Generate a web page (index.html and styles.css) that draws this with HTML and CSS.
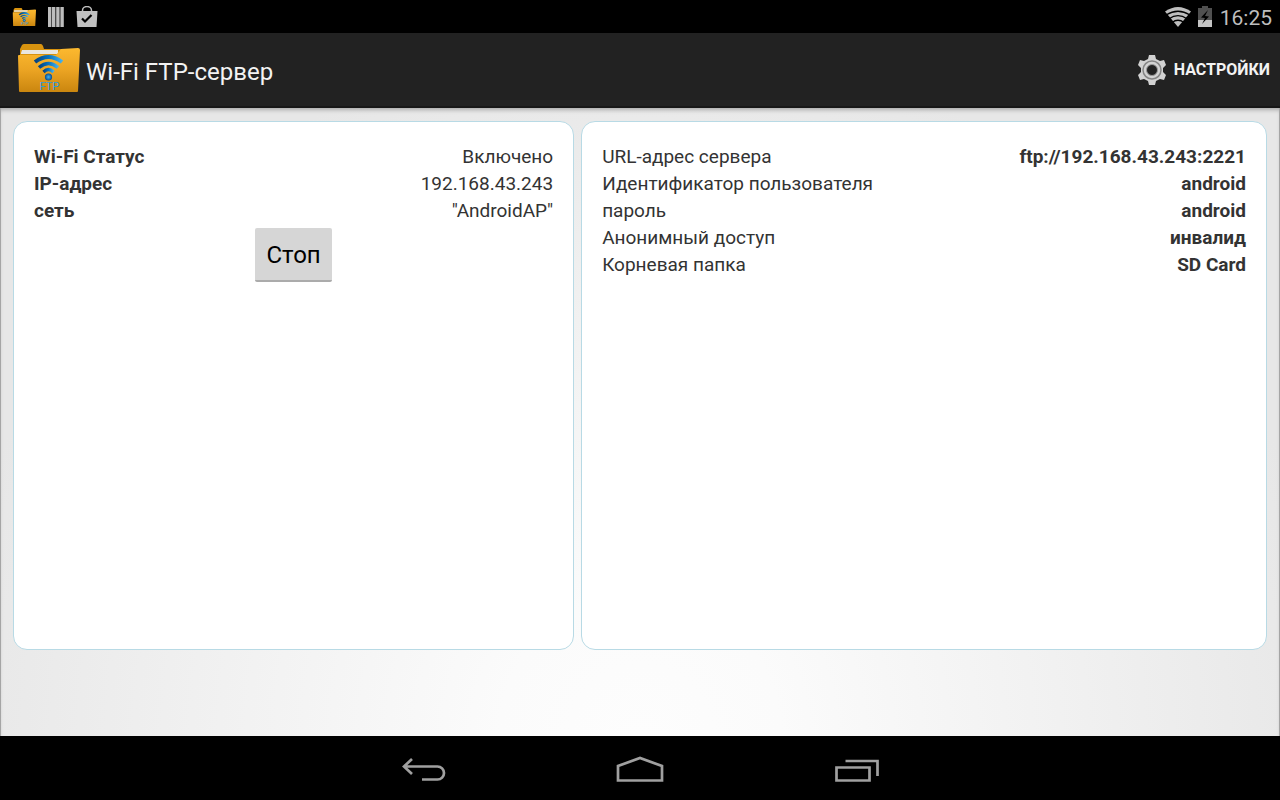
FILE: index.html
```html
<!DOCTYPE html>
<html lang="ru">
<head>
<meta charset="utf-8">
<meta name="viewport" content="width=device-width, initial-scale=1">
<title>Wi-Fi FTP-сервер</title>
<link rel="stylesheet" href="styles.css">
</head>
<body>
<svg class="defs" aria-hidden="true">
  <defs>
    <linearGradient id="folder" x1="0" y1="0" x2="0" y2="1"><stop offset="0" stop-color="#fcb92f"/><stop offset=".5" stop-color="#eba423"/><stop offset="1" stop-color="#ca860f"/></linearGradient>
    <linearGradient id="wave" x1="0" y1="0" x2="1" y2="0"><stop offset="0" stop-color="#05427f"/><stop offset=".5" stop-color="#0872be"/><stop offset="1" stop-color="#43b0ee"/></linearGradient>
    <radialGradient id="ball"><stop offset="0" stop-color="#40b5f4"/><stop offset="1" stop-color="#064a8e"/></radialGradient>
    <symbol id="app" viewBox="0 0 64 50">
      <path d="M4 12V6l2-4q1-1 2-1h17q1 0 2 2l1 3h32v7H4z" fill="#d8930f"/>
      <path d="M5 10l1-3h36v4H5z" fill="#e9e6df"/>
      <path d="M2 13q0-1 1-1h37l5-6 17-1q2 0 2 2l-2 41q0 1-1 1H4q-1 0-1-1z" fill="url(#folder)"/>
      <g fill="none" stroke="url(#wave)">
        <path d="M19 19q13.500-10 27 0" stroke-width="4"/><path d="M23 24.500q9.500-8 19 0" stroke-width="3.500"/><path d="M27.500 29q5-5 10 0" stroke-width="3.200"/>
      </g>
      <circle cx="32.500" cy="34" r="3.600" fill="url(#ball)"/>
      <text x="33.500" y="46.500" text-anchor="middle" class="app-label">FTP</text>
    </symbol>
  </defs>
</svg>
<div class="screen">
  <div class="status">
    <div class="status-group">
      <svg class="mini-app" viewBox="0 0 64 50"><use href="#app"/></svg>
      <svg class="mini-bars" viewBox="0 0 16 20" fill="#bdbdbd"><path d="M0 0h3.400v20H0zM4 0h3.400v20H4zM8.200 0h3.400v20H8.200zM12.400 0h3.400v20h-3.400z"/></svg>
      <svg class="mini-bag" viewBox="0 0 21 21"><path d="M6 6V4.500a4.500 4 0 0 1 9 0V6" fill="none" stroke="#bdbdbd" stroke-width="1.500"/><path d="M0 5h21l-1 16H1z" fill="#c0c0c0"/><path d="M5.500 12.500l3 3 6.500-6.500" fill="none" stroke="#000" stroke-width="2.200"/></svg>
    </div>
    <div class="status-group status-right">
      <svg class="wifi" viewBox="0 0 26 20"><path d="M13 20L0 4.500Q13-4.500 26 4.500z" fill="#bebebe"/><g fill="none" stroke="#000" stroke-width="1.300"><path d="M1 8q12-7.500 24 0"/><path d="M4 11.700q9-6 18 0"/><path d="M7 15.500q6-4.500 12 0"/></g></svg>
      <svg class="battery" viewBox="0 0 14 21"><path d="M4 0h6v2h4v19H0V2h4z" fill="#505050"/><path d="M0 14h14v7H0z" fill="#c4c4c4"/><path d="M10 4L3 11.500l4 .5-3 6 7-7.500-4-.5z" fill="#000"/></svg>
      <time class="clock">16:25</time>
    </div>
  </div>
  <header class="bar">
    <svg class="logo" viewBox="0 0 64 50"><use href="#app"/></svg>
    <h1 class="title">Wi-Fi FTP-сервер</h1>
    <button class="settings" type="button">
      <svg class="gear" viewBox="0 0 28 30"><path d="M11 0h6l1 4 4 2 4-1 2 5-3 3v4l3 3-2 5-4-1-4 2-1 4h-6l-1-4-4-2-4 1-2-5 3-3v-4l-3-3 2-5 4 1 4-2z" fill="#d2d2d2"/><circle cx="14" cy="15" r="9" fill="none" stroke="#858585" stroke-width="1.500"/><circle cx="14" cy="15" r="5.500" fill="#222" stroke="#999" stroke-width="1"/></svg>
      НАСТРОЙКИ
    </button>
  </header>
  <main class="content">
    <section class="card">
      <dl class="rows labels-bold">
        <div class="row"><dt>Wi-Fi Статус</dt><dd>Включено</dd></div>
        <div class="row"><dt>IP-адрес</dt><dd>192.168.43.243</dd></div>
        <div class="row"><dt>сеть</dt><dd>"AndroidAP"</dd></div>
      </dl>
      <button class="stop" type="button">Стоп</button>
    </section>
    <section class="card">
      <dl class="rows values-bold">
        <div class="row"><dt>URL-адрес сервера</dt><dd>ftp://192.168.43.243:2221</dd></div>
        <div class="row"><dt>Идентификатор пользователя</dt><dd>android</dd></div>
        <div class="row"><dt>пароль</dt><dd>android</dd></div>
        <div class="row"><dt>Анонимный доступ</dt><dd>инвалид</dd></div>
        <div class="row"><dt>Корневая папка</dt><dd>SD Card</dd></div>
      </dl>
    </section>
  </main>
  <nav class="nav">
    <button class="nav-button" type="button" aria-label="Назад"><svg class="nav-icon" viewBox="0 0 48 28"><path d="M12 4L4 11.500l8 7.500M4 11.500h33.500a6.500 6.500 0 0 1 0 13H22" fill="none" stroke="#a0a0a0" stroke-width="2.700"/></svg></button>
    <button class="nav-button" type="button" aria-label="Домой"><svg class="nav-icon" viewBox="0 0 48 28"><path d="M2 25.500V11l22-8 22 8v14.500z" fill="none" stroke="#a0a0a0" stroke-width="2.700"/></svg></button>
    <button class="nav-button" type="button" aria-label="Недавние"><svg class="nav-icon" viewBox="0 0 48 28"><path d="M4.500 12.500h33v13h-33zM13.500 6h32v15" fill="none" stroke="#a0a0a0" stroke-width="2.700"/></svg></button>
  </nav>
</div>
</body>
</html>
```
FILE: styles.css
```css
* {
  box-sizing: border-box;
}

body {
  margin: 0;
  font-family: Roboto, "Noto Sans", sans-serif;
  color: #333;
  background: #000;
}

button {
  font-family: inherit;
  border: 0;
  cursor: pointer;
}

.defs {
  position: absolute;
  width: 0;
  height: 0;
}

.app-label {
  font: 11px Roboto, sans-serif;
  fill: #2b9be0;
}

.screen {
  display: flex;
  flex-direction: column;
  min-height: 100vh;
}

.status {
  display: flex;
  justify-content: space-between;
  height: 33px;
  padding: 0 8px 0 12px;
}

.status-group {
  display: flex;
  align-items: center;
  gap: 12px;
}

.status-right {
  gap: 7px;
}

.mini-app {
  width: 24px;
  height: 20px;
}

.mini-bars {
  width: 16px;
  height: 20px;
}

.mini-bag {
  width: 22px;
  height: 21px;
}

.wifi {
  width: 26px;
  height: 20px;
}

.battery {
  width: 14px;
  height: 21px;
}

.clock {
  padding: 2px 0 0 1px;
  font-size: 21px;
  line-height: 30px;
  color: #bebebe;
}

.bar {
  display: flex;
  align-items: center;
  height: 75px;
  padding: 0 10px 0 16px;
  background: #222;
  border-bottom: 2px solid #181818;
}

.logo {
  width: 64px;
  height: 50px;
  margin-bottom: 4px;
}

.title {
  margin: 0;
  padding: 4px 0 0 6px;
  font-size: 24px;
  font-weight: 400;
  line-height: 32px;
  color: #f3f3f3;
}

.settings {
  display: flex;
  align-items: center;
  gap: 8px;
  margin-left: auto;
  padding: 0;
  font-size: 16px;
  font-weight: 700;
  color: #f3f3f3;
  background: none;
}

.gear {
  width: 28px;
  height: 30px;
}

.content {
  flex: 1;
  display: grid;
  grid-template-columns: 9fr 11fr;
  gap: 7px;
  padding: 13px 12px 86px;
  background: radial-gradient(circle at 50% 100%, #fdfdfd 0, #fbfbfb 140px, #e7e7e7 700px);
  border: solid #a5a5a5;
  border-width: 0 1px;
  box-shadow: inset 0 4px 4px -2px #aaa;
}

.card {
  display: flex;
  flex-direction: column;
  align-items: center;
  padding: 21px 19px;
  background: #fff;
  border: 1px solid #b8dae5;
  border-radius: 14px;
}

.rows {
  width: 100%;
  margin: 0;
  padding: 0 1px;
  font-size: 19px;
  line-height: 27px;
}

.row {
  display: flex;
  justify-content: space-between;
}

.row dd {
  margin: 0;
}

.labels-bold dt,
.values-bold dd {
  font-weight: 700;
}

.stop {
  height: 54px;
  margin-top: 4px;
  padding: 2px 11px 0;
  font-size: 24px;
  color: #000;
  background: #d6d6d6;
  border-bottom: 2px solid #ababab;
  border-radius: 2px;
}

.nav {
  display: flex;
  justify-content: center;
  gap: 88px;
  height: 64px;
  background: #000;
}

.nav-button {
  width: 128px;
  padding: 4px 0 0;
  background: none;
}

.nav-icon {
  width: 48px;
  height: 28px;
}
```
